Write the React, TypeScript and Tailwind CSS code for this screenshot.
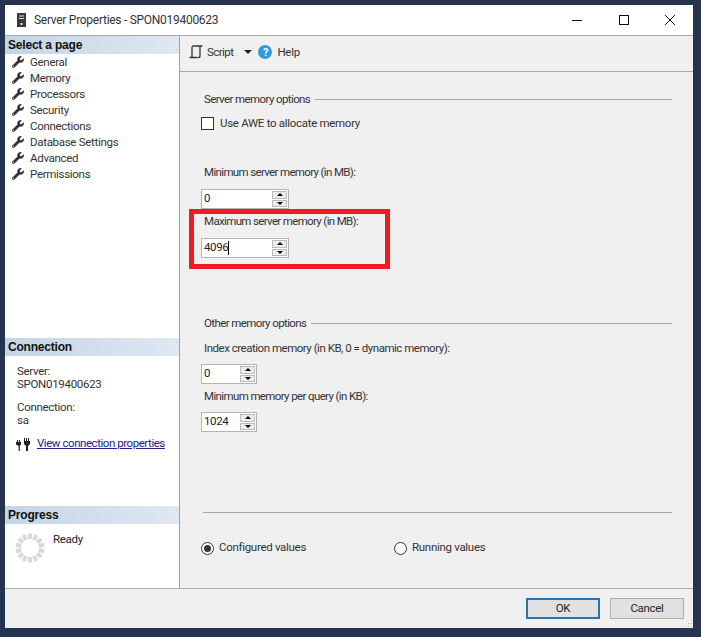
import { FaWrench } from "react-icons/fa";

const pages = ["General", "Memory", "Processors", "Security", "Connections", "Database Settings", "Advanced", "Permissions"];

function SectionHeader({ title }: { title: string }) {
  return (
    <div className="flex h-[18px] items-center bg-gradient-to-r from-[#c4d4e5] to-[#dfe8f3] pl-[3px] font-['Liberation_Sans',Arial,sans-serif] text-[12px] font-bold leading-none tracking-[-0.2px] text-[#111]">
      {title}
    </div>
  );
}

function Spinner({ value, width, caret }: { value: string; width: string; caret?: boolean }) {
  return (
    <div className={`flex h-[20px] items-center justify-between border border-[#b4b4b4] bg-white pl-[2px] pr-[1px] ${width}`}>
      <span className="flex items-center leading-none tracking-[-0.4px] text-[#222]">
        {value}
        {caret && <span className="h-[14px] w-px bg-black" />}
      </span>
      <div className="flex h-[16px] w-[15px] flex-col gap-px">
        <span className="flex flex-1 items-center justify-center border border-[#bbb] bg-[#ececec]">
          <span className="h-0 w-0 border-x-[3px] border-b-[3px] border-x-transparent border-b-black" />
        </span>
        <span className="flex flex-1 items-center justify-center border border-[#bbb] bg-[#ececec]">
          <span className="h-0 w-0 border-x-[3px] border-t-[3px] border-x-transparent border-t-black" />
        </span>
      </div>
    </div>
  );
}

function GroupLabel({ title }: { title: string }) {
  return (
    <div className="flex h-[16px] items-center gap-[5px] pl-[24px] pr-[21px]">
      <span className="whitespace-nowrap pt-px tracking-[-0.6px]">{title}</span>
      <span className="h-px flex-1 bg-[#a8a8a8]" />
    </div>
  );
}

function Radio({ label, checked, className }: { label: string; checked?: boolean; className: string }) {
  return (
    <div className={`flex items-center gap-[5px] ${className}`}>
      <span className="flex h-[13px] w-[13px] items-center justify-center rounded-full border border-[#333] bg-white">
        {checked && <span className="h-[7px] w-[7px] rounded-full bg-[#333]" />}
      </span>
      <span>{label}</span>
    </div>
  );
}

function ProgressRing() {
  const segments = Array.from({ length: 14 }, (_, i) => (i * 360) / 14);
  return (
    <svg width="30" height="30" viewBox="0 0 30 30">
      {segments.map((a) => (
        <rect key={a} x="13" y="0.5" width="4" height="5.5" fill="#d9d9d9" transform={`rotate(${a} 15 15)`} />
      ))}
    </svg>
  );
}

export default function App() {
  return (
    <div className="h-[637px] w-[701px] overflow-hidden bg-[#25344f] pb-[9px] pl-[5px] pr-[8px] pt-[5px] font-['Roboto',Arial,sans-serif] text-[11.5px] tracking-[-0.3px] text-[#333]">
      <div className="flex h-full flex-col bg-[#f0f0f0]">
        {/* title bar */}
        <div className="flex h-[31px] shrink-0 items-center border-b border-[#a9a9a9] bg-white">
          <svg width="10" height="14" viewBox="0 0 10 14" className="ml-[12px]">
            <rect width="9" height="14" fill="#3a3a3a" />
            <rect x="2" y="2.5" width="5" height="1" fill="#ddd" />
            <rect x="2" y="5" width="5" height="1" fill="#ddd" />
            <rect x="3.5" y="10" width="2" height="2" fill="#ddd" />
          </svg>
          <span className="ml-[7px] text-[12px] tracking-[-0.28px] text-[#333]">Server Properties - SPON019400623</span>
          <svg width="120" height="12" viewBox="0 0 120 12" className="ml-auto mr-px" fill="none" stroke="#111">
            <path d="M0 6.5h10" />
            <rect x="47.5" y="1.5" width="9" height="9" strokeWidth="1" />
            <path d="M93 1l10 10M103 1L93 11" />
          </svg>
        </div>

        <div className="flex min-h-0 flex-1">
          {/* left panel */}
          <div className="flex w-[175px] shrink-0 flex-col border-r border-[#a0a0a0] bg-white">
            <SectionHeader title="Select a page" />
            <div className="flex flex-col">
              {pages.map((p) => (
                <div key={p} className="flex h-[16px] items-center pl-[7px]">
                  <FaWrench className="h-[12px] w-[12px] text-[#333]" />
                  <span className={`ml-[5px] px-px pt-px ${p === "Memory" ? "bg-[#f3f5f9]" : ""}`}>{p}</span>
                </div>
              ))}
            </div>
            <div className="mt-[156px]">
              <SectionHeader title="Connection" />
            </div>
            <div className="pl-[12px] pt-[9px] leading-[13px]">
              <div>Server:</div>
              <div>SPON019400623</div>
              <div className="mt-[10px]">Connection:</div>
              <div>sa</div>
            </div>
            <div className="mt-[10px] flex h-[14px] items-center pl-[11px]">
              <svg width="16" height="14" viewBox="0 0 16 14" fill="#222">
                <path d="M1 3h1v2h1V3h1v2h1v2.5L3.8 9v5H2.6V9L0 7.5V5h1zM8 1h1v3h1V1h1v3h1V1h1v3h1v3l-2 2v5h-2V9L8 7z" />
              </svg>
              <span className="ml-[5px] tracking-[-0.45px] text-[#22228f] underline">View connection properties</span>
            </div>
            <div className="mt-[55px]">
              <SectionHeader title="Progress" />
            </div>
            <div className="flex items-start pl-[10px] pt-[9px]">
              <ProgressRing />
              <span className="ml-[8px] leading-[12px] text-[#222]">Ready</span>
            </div>
          </div>

          {/* right panel */}
          <div className="flex min-w-0 flex-1 flex-col">
            <div className="flex h-[36px] shrink-0 items-center border-b border-[#a9a9a9] pb-[3px] pl-[9px]">
              <svg width="14" height="14" viewBox="0 0 14 14" fill="none" stroke="#333" strokeWidth="1.3">
                <path d="M.5 12.5h8M3 12V2.5C3 1.5 3.7 1 4.5 1h9M11 1.5V11c0 1-.8 1.7-2 1.7" />
              </svg>
              <span className="ml-[4px] pt-px tracking-[-0.55px]">Script</span>
              <span className="ml-[11px] h-0 w-0 border-x-[4px] border-t-[4px] border-x-transparent border-t-[#222]" />
              <span className="ml-[6px] flex h-[14px] w-[14px] items-center justify-center rounded-full bg-[#2f9ad6] text-[11px] font-bold leading-none text-white">?</span>
              <span className="ml-[5px] pt-px">Help</span>
            </div>

            <div className="relative flex-1">
              <div className="pt-[19px]">
                <GroupLabel title="Server memory options" />
                <div className="ml-[21px] mt-[9px] flex h-[14px] items-center gap-[6px]">
                  <span className="h-[13px] w-[13px] border border-[#333] bg-white" />
                  <span className="pt-px">Use AWE to allocate memory</span>
                </div>
                <div className="ml-[24px] mt-[35px] h-[14px] leading-[14px] tracking-[-0.65px]">Minimum server memory (in MB):</div>
                <div className="ml-[21px] mt-[10px]">
                  <Spinner value="0" width="w-[88px]" />
                </div>
                <div className="ml-[24px] mt-[5px] h-[14px] leading-[14px] tracking-[-0.65px]">Maximum server memory (in MB):</div>
                <div className="ml-[21px] mt-[10px]">
                  <Spinner value="4096" width="w-[88px]" caret />
                </div>
                <div className="mt-[57px]">
                  <GroupLabel title="Other memory options" />
                </div>
                <div className="ml-[24px] mt-[10px] h-[14px] leading-[14px] tracking-[-0.48px]">Index creation memory (in KB, 0 = dynamic memory):</div>
                <div className="ml-[21px] mt-[9px]">
                  <Spinner value="0" width="w-[56px]" />
                </div>
                <div className="ml-[24px] mt-[5px] h-[14px] leading-[14px] tracking-[-0.62px]">Minimum memory per query (in KB):</div>
                <div className="ml-[21px] mt-[9px]">
                  <Spinner value="1024" width="w-[56px]" />
                </div>
                <div className="ml-[23px] mr-[21px] mt-[80px] h-px bg-[#a8a8a8]" />
                <div className="mt-[28px] flex h-[14px] items-center">
                  <Radio label="Configured values" checked className="ml-[21px]" />
                  <Radio label="Running values" className="ml-[88px]" />
                </div>
              </div>
              <div className="pointer-events-none absolute left-[9px] top-[137px] h-[60px] w-[201px] border-[5px] border-[#ed1c24]" />
            </div>
          </div>
        </div>

        {/* footer */}
        <div className="relative flex h-[40px] shrink-0 items-start justify-end gap-[10px] border-t border-[#ababab] pr-[9px] pt-[9px]">
          <button type="button" className="h-[21px] w-[74px] border-2 border-[#2a72ae] bg-[#e1e1e1] text-[#222]">OK</button>
          <button type="button" className="h-[21px] w-[74px] border border-[#adadad] bg-[#e1e1e1] text-[#222]">Cancel</button>
          <svg width="8" height="8" viewBox="0 0 8 8" fill="#b5b5b5" className="absolute bottom-0 right-0">
            <rect x="6" y="0" width="1" height="1" />
            <rect x="3" y="3" width="1" height="1" />
            <rect x="6" y="3" width="1" height="1" />
            <rect x="0" y="6" width="1" height="1" />
            <rect x="3" y="6" width="1" height="1" />
            <rect x="6" y="6" width="1" height="1" />
          </svg>
        </div>
      </div>
    </div>
  );
}
